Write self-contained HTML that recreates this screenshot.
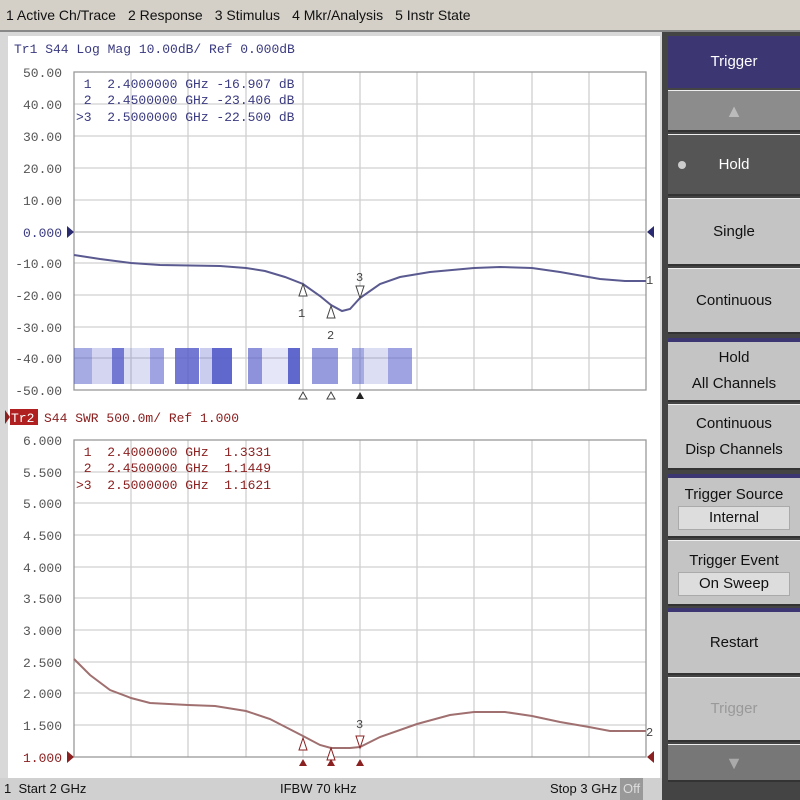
<!DOCTYPE html>
<html><head><style>
body{margin:0;width:800px;height:800px;overflow:hidden;background:#c8c8c8;font-family:"Liberation Sans",sans-serif;}
.menu{position:absolute;left:0;top:0;width:800px;height:30px;background:#d4d0c8;border-bottom:2px solid #888;font-size:14px;line-height:30px;color:#111;}
.menu span{margin-left:6px;margin-right:6px;}
.btn{position:absolute;left:668px;width:132px;background:#c4c4c4;border-top:1px solid #eee;border-bottom:2px solid #333;box-sizing:border-box;text-align:center;font-size:15px;color:#111;display:flex;flex-direction:column;justify-content:center;align-items:center;line-height:26px;}
.sub{background:#ddd;width:110px;height:22px;line-height:22px;border:1px solid #aaa;}
svg text{white-space:pre}
</style></head><body>
<div class="menu"><span>1 Active Ch/Trace</span><span>2 Response</span><span>3 Stimulus</span><span>4 Mkr/Analysis</span><span>5 Instr State</span></div>
<div style="position:absolute;left:0;top:32px;width:662px;height:746px;background:#d8d8d8"></div>
<div style="position:absolute;left:8px;top:36px;width:652px;height:742px;background:#fff"></div>
<svg style="position:absolute;left:0;top:0" width="662" height="800" font-family="Liberation Mono, monospace" xml:space="preserve">
<g stroke="#d0d0d0" stroke-width="1.3">
<path d="M131 72V390M188 72V390M246 72V390M303 72V390M360 72V390M417 72V390M474 72V390M532 72V390M589 72V390"/>
<path d="M74 104H646M74 136H646M74 168H646M74 200H646M74 263H646M74 295H646M74 327H646M74 358H646"/>
<path d="M131 440V757M188 440V757M246 440V757M303 440V757M360 440V757M417 440V757M474 440V757M532 440V757M589 440V757"/>
<path d="M74 472H646M74 503H646M74 535H646M74 567H646M74 598H646M74 630H646M74 662H646M74 693H646M74 725H646"/>
</g>
<rect x="74" y="72" width="572" height="318" fill="none" stroke="#999" stroke-width="1.3"/>
<rect x="74" y="440" width="572" height="317" fill="none" stroke="#999" stroke-width="1.3"/>
<path d="M74 232H646" stroke="#bbb" stroke-width="1.3"/>
<g font-size="13" fill="#3a3a80">
<text x="14" y="53">Tr1 S44 Log Mag 10.00dB/ Ref 0.000dB</text>
<text x="76" y="88"> 1  2.4000000 GHz -16.907 dB</text>
<text x="76" y="104"> 2  2.4500000 GHz -23.406 dB</text>
<text x="76" y="121">&gt;3  2.5000000 GHz -22.500 dB</text>
</g>
<g font-size="13" fill="#555" text-anchor="end">
<text x="62" y="77">50.00</text><text x="62" y="109">40.00</text><text x="62" y="141">30.00</text><text x="62" y="173">20.00</text><text x="62" y="205">10.00</text><text x="62" y="237" fill="#3a3a80">0.000</text><text x="62" y="268">-10.00</text><text x="62" y="300">-20.00</text><text x="62" y="332">-30.00</text><text x="62" y="363">-40.00</text><text x="62" y="395">-50.00</text>
<text x="62" y="445">6.000</text><text x="62" y="477">5.500</text><text x="62" y="508">5.000</text><text x="62" y="540">4.500</text><text x="62" y="572">4.000</text><text x="62" y="603">3.500</text><text x="62" y="635">3.000</text><text x="62" y="667">2.500</text><text x="62" y="698">2.000</text><text x="62" y="730">1.500</text><text x="62" y="762" fill="#8a2020">1.000</text>
</g>
<path d="M67 226L74 232L67 238Z" fill="#2a2a70"/><path d="M654 226L647 232L654 238Z" fill="#2a2a70"/>
<path d="M74 255 L100 259 L131 263 L160 265 L220 266 L246 268 L265 271 L285 277 L303 284 L320 296 L331 305 L342 311 L350 309 L360 298 L380 284 L400 277 L430 272 L474 268 L500 267 L532 268 L560 272 L600 279 L625 281 L646 281" fill="none" stroke="#5a5a90" stroke-width="2"/>
<g fill="#fff" stroke="#444" stroke-width="1"><path d="M303 284l-4 12h8z"/><path d="M331 306l-4 12h8z"/><path d="M360 298l-4 -12h8z"/></g>
<g font-size="12" fill="#444"><text x="298" y="317">1</text><text x="327" y="339">2</text><text x="356" y="281">3</text><text x="646" y="284">1</text></g>
<g fill="#fff" stroke="#444"><path d="M303 392l-4 7h8z"/><path d="M331 392l-4 7h8z"/></g><path d="M360 392l-4 7h8z" fill="#222"/>
<g fill="#5058c8">
<rect x="74" y="348" width="18" height="36" opacity=".5"/><rect x="112" y="348" width="12" height="36" opacity=".8"/><rect x="150" y="348" width="14" height="36" opacity=".55"/><rect x="175" y="348" width="24" height="36" opacity=".8"/><rect x="212" y="348" width="20" height="36" opacity=".9"/><rect x="248" y="348" width="14" height="36" opacity=".65"/><rect x="288" y="348" width="12" height="36" opacity=".9"/><rect x="312" y="348" width="26" height="36" opacity=".6"/><rect x="352" y="348" width="12" height="36" opacity=".5"/><rect x="388" y="348" width="24" height="36" opacity=".55"/>
<rect x="92" y="348" width="20" height="36" opacity=".25"/><rect x="124" y="348" width="26" height="36" opacity=".2"/><rect x="200" y="348" width="12" height="36" opacity=".3"/><rect x="262" y="348" width="26" height="36" opacity=".15"/><rect x="364" y="348" width="24" height="36" opacity=".2"/>
</g>
<rect x="10" y="409" width="28" height="16" fill="#b02020"/><path d="M5 410l5 7l-5 7z" fill="#8a2020"/>
<g font-size="13" fill="#8a2020">
<text x="11" y="422" fill="#fff">Tr2</text><text x="44" y="422">S44 SWR 500.0m/ Ref 1.000</text>
<text x="76" y="456"> 1  2.4000000 GHz  1.3331</text>
<text x="76" y="472"> 2  2.4500000 GHz  1.1449</text>
<text x="76" y="489">&gt;3  2.5000000 GHz  1.1621</text>
</g>
<path d="M67 751L74 757L67 763Z" fill="#8a2020"/><path d="M654 751L647 757L654 763Z" fill="#8a2020"/>
<path d="M74 659 L90 675 L110 690 L131 698 L150 703 L188 705 L215 706 L246 711 L270 719 L303 736 L320 745 L331 748 L350 748 L360 747 L380 737 L417 724 L450 715 L474 712 L505 712 L532 716 L560 722 L589 727 L610 731 L646 731" fill="none" stroke="#a07070" stroke-width="2"/>
<g fill="#fff" stroke="#8a2020"><path d="M303 738l-4 12h8z"/><path d="M331 748l-4 12h8z"/><path d="M360 748l-4 -12h8z"/></g>
<g font-size="12" fill="#444"><text x="356" y="728">3</text><text x="646" y="736">2</text></g>
<g fill="#8a2020"><path d="M303 759l-4 7h8z"/><path d="M331 759l-4 7h8z"/><path d="M360 759l-4 7h8z"/></g>
</svg>
<div style="position:absolute;left:0;top:778px;width:662px;height:22px;background:#d0d0d0;font-size:13px;line-height:22px;color:#111">
<span style="position:absolute;left:4px">1&nbsp; Start 2 GHz</span><span style="position:absolute;left:280px">IFBW 70 kHz</span><span style="position:absolute;left:550px">Stop 3 GHz</span><span style="position:absolute;left:620px;background:#999;color:#ddd;padding:0 3px">Off</span></div>
<div style="position:absolute;left:662px;top:32px;width:138px;height:768px;background:#444"></div>
<div class="btn" style="top:36px;height:52px;background:#3c3672;color:#fff;border:none">Trigger</div>
<div class="btn" style="top:90px;height:42px;background:#8c8c8c;"><span style="color:#bbb;font-size:18px">▲</span></div>
<div class="btn" style="top:134px;height:62px;background:#555;color:#fff">Hold<span style="position:absolute;left:10px;top:26px;width:8px;height:8px;border-radius:50%;background:#ccc"></span></div>
<div class="btn" style="top:198px;height:68px;">Single</div>
<div class="btn" style="top:268px;height:66px;">Continuous</div>
<div class="btn" style="top:338px;height:64px;border-top:4px solid #3c3672">Hold<br>All Channels</div>
<div class="btn" style="top:404px;height:66px;">Continuous<br>Disp Channels</div>
<div class="btn" style="top:474px;height:64px;border-top:4px solid #3c3672;line-height:22px">Trigger Source<div class="sub">Internal</div></div>
<div class="btn" style="top:540px;height:66px;line-height:22px">Trigger Event<div class="sub">On Sweep</div></div>
<div class="btn" style="top:608px;height:67px;border-top:4px solid #3c3672">Restart</div>
<div class="btn" style="top:677px;height:65px;color:#999">Trigger</div>
<div class="btn" style="top:744px;height:38px;background:#777"><span style="color:#aaa;font-size:18px">▼</span></div>
</body></html>
